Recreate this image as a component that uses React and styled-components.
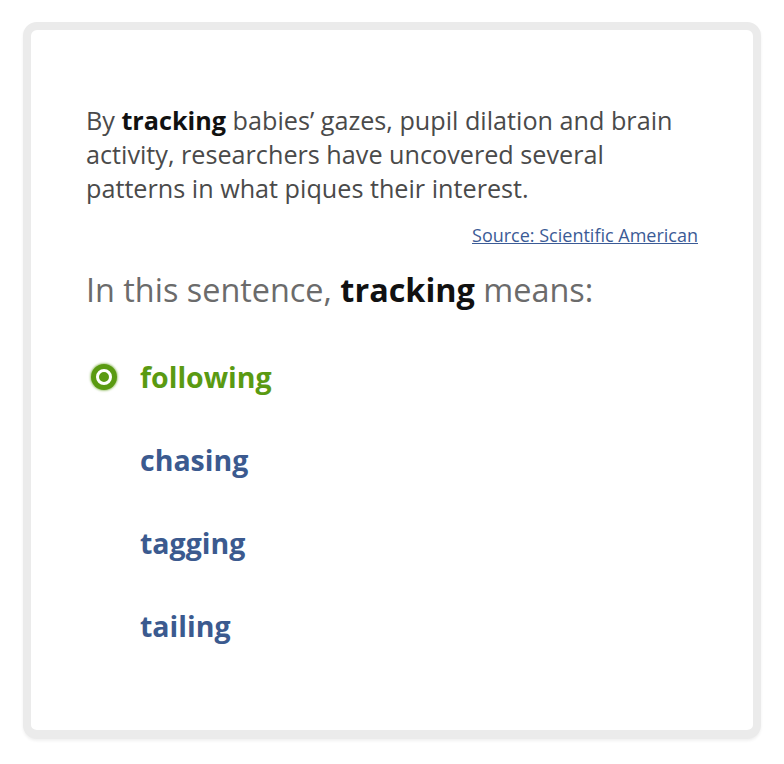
import React from 'react';
import styled, { createGlobalStyle } from 'styled-components';

const GlobalStyle = createGlobalStyle`
  html, body {
    margin: 0;
    padding: 0;
    background: #ffffff;
  }
  body {
    font-family: "Open Sans", "Noto Sans", Arial, sans-serif;
  }
`;

const Page = styled.div`
  padding: 22px 23px;
  width: 784px;
  box-sizing: border-box;
`;

const Frame = styled.div`
  border: 8px solid #ebebeb;
  border-bottom-width: 9px;
  border-radius: 14px;
  box-shadow: 0 2px 3px rgba(0, 0, 0, 0.06);
  background: #ffffff;
`;

const Card = styled.div`
  height: 700px;
  box-sizing: border-box;
  padding: 73px 55px 0;
  display: flex;
  flex-direction: column;
`;

const Passage = styled.p`
  margin: 0;
  font-size: 25.2px;
  line-height: 34px;
  color: #4a4a4a;
`;

const Strong = styled.b`
  font-weight: 700;
  color: #111111;
`;

const SourceLink = styled.a`
  align-self: flex-end;
  margin-top: 18px;
  font-size: 18px;
  line-height: 24px;
  color: #3b5b96;
  text-decoration: underline;
`;

const Question = styled.h2`
  margin: 22px 0 0;
  font-size: 32.4px;
  line-height: 40px;
  font-weight: 400;
  color: #6b6b6b;
`;

const Options = styled.ul`
  list-style: none;
  margin: 48px 0 0;
  padding: 0;
  display: flex;
  flex-direction: column;
  gap: 43px;
`;

const Option = styled.li`
  display: flex;
  align-items: center;
  gap: 18px;
  height: 40px;
  font-size: 28.5px;
  font-weight: 700;
  color: ${props => (props.$selected ? '#5a9a12' : '#3b5a8f')};
`;

const RadioSlot = styled.span`
  width: 36px;
  height: 36px;
  display: flex;
  align-items: center;
  justify-content: center;
  flex-shrink: 0;
`;

const Radio = styled.span`
  width: 16px;
  height: 16px;
  box-sizing: border-box;
  border-radius: 50%;
  background: #5a9a12;
  border: 3px solid #ffffff;
  box-shadow: 0 0 0 5px #5a9a12, 0 0 2px 6px rgba(90, 154, 18, 0.5);
`;

const choices = ['following', 'chasing', 'tagging', 'tailing'];

const App = () => {
  return (
    <Page>
      <GlobalStyle />
      <Frame>
        <Card>
          <Passage>
            By <Strong>tracking</Strong> babies’ gazes, pupil dilation and brain
            activity, researchers have uncovered several patterns in what
            piques their interest.
          </Passage>
          <SourceLink href="#">Source: Scientific American</SourceLink>
          <Question>
            In this sentence, <Strong>tracking</Strong> means:
          </Question>
          <Options>
            {choices.map((choice, i) => (
              <Option key={choice} $selected={i === 0}>
                <RadioSlot>{i === 0 && <Radio />}</RadioSlot>
                {choice}
              </Option>
            ))}
          </Options>
        </Card>
      </Frame>
    </Page>
  );
};

export default App;
